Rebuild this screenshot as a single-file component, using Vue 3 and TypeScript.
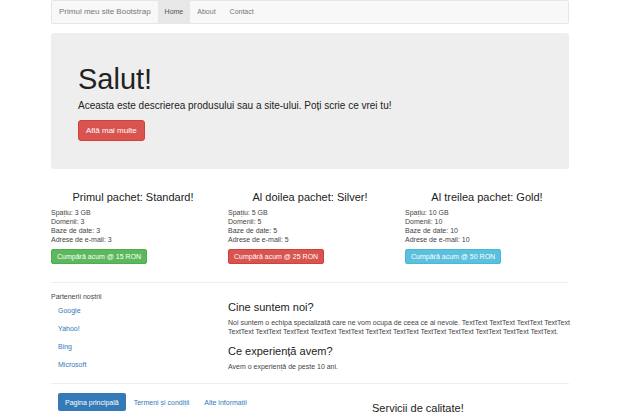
<script setup lang="ts">
interface Plan {
  title: string
  amount: number
  price: number
  tone: 'success' | 'danger' | 'info'
}

const navigation: string[] = ['Home', 'About', 'Contact']
const plans: Plan[] = [
  { title: 'Primul pachet: Standard!', amount: 3, price: 15, tone: 'success' },
  { title: 'Al doilea pachet: Silver!', amount: 5, price: 25, tone: 'danger' },
  { title: 'Al treilea pachet: Gold!', amount: 10, price: 50, tone: 'info' },
]
const partners: string[] = ['Google', 'Yahoo!', 'Bing', 'Microsoft']
const pills: string[] = ['Pagina principală', 'Termeni și condiții', 'Alte informații']
const filler: string = Array(16).fill('TextText').join(' ')
</script>

<template>
  <div class="container">
    <nav class="navbar">
      <a class="brand" href="#">Primul meu site Bootstrap</a>
      <a
        v-for="(item, index) in navigation"
        :key="item"
        class="nav-link"
        :class="{ active: index === 0 }"
        href="#"
      >{{ item }}</a>
    </nav>

    <header class="hero">
      <h1>Salut!</h1>
      <p class="lead">Aceasta este descrierea produsului sau a site-ului. Poți scrie ce vrei tu!</p>
      <button class="button danger large" type="button">Află mai multe</button>
    </header>

    <main>
      <section class="plans">
        <article v-for="plan in plans" :key="plan.title">
          <h2 class="centered">{{ plan.title }}</h2>
          <p>
            Spațiu: {{ plan.amount }} GB<br>
            Domenii: {{ plan.amount }}<br>
            Baze de date: {{ plan.amount }}<br>
            Adrese de e-mail: {{ plan.amount }}
          </p>
          <button class="button" :class="plan.tone" type="button">Cumpără acum @ {{ plan.price }} RON</button>
        </article>
      </section>

      <section class="about">
        <aside>
          <p>Partenerii noștrii</p>
          <ul class="partners">
            <li v-for="partner in partners" :key="partner"><a href="#">{{ partner }}</a></li>
          </ul>
        </aside>
        <div class="story">
          <h2>Cine suntem noi?</h2>
          <p>Noi suntem o echipa specializată care ne vom ocupa de ceea ce ai nevoie. {{ filler }}.</p>
          <h2>Ce experiență avem?</h2>
          <p>Avem o experiență de peste 10 ani.</p>
        </div>
      </section>
    </main>

    <footer class="footer">
      <nav class="pills">
        <a v-for="(pill, index) in pills" :key="pill" :class="{ active: index === 0 }" href="#">{{ pill }}</a>
      </nav>
      <h2 class="centered">Servicii de calitate!</h2>
    </footer>
  </div>
</template>

<style>
body {
  background: #fff;
}
</style>

<style scoped>
.container {
  padding: 0 51px;
  color: #444;
  font-family: "Liberation Sans", Arial, sans-serif;
  font-size: 7px;
  line-height: 9px;
}

h1,
h2,
p,
ul {
  margin: 0;
  padding: 0;
}

a {
  color: #337ab7;
  text-decoration: none;
}

h1,
h2 {
  color: #222;
  font-weight: 400;
}

h1 {
  font-size: 29px;
  line-height: 32px;
}

h2 {
  font-size: 11px;
  line-height: 12px;
}

.centered {
  text-align: center;
}

.navbar {
  display: flex;
  border: 1px solid #e7e7e7;
  border-radius: 2px;
  background: #f8f8f8;
  line-height: 22px;
}

.navbar a {
  padding: 0 7px;
  color: #777;
}

.navbar .brand {
  font-size: 8px;
}

.navbar .active {
  background: #e7e7e7;
  color: #555;
}

.hero {
  margin-top: 9px;
  padding: 30px 27px 28px;
  border-radius: 3px;
  background: #eee;
}

.lead {
  margin: 4px 0 7px;
  color: #222;
  font-size: 10px;
  line-height: 14px;
}

.button {
  display: block;
  padding: 2px 5px;
  border: 1px solid;
  border-radius: 2px;
  color: #fff;
  font: inherit;
}

.button.large {
  padding: 4px 7px;
  border-radius: 3px;
  font-size: 8px;
  line-height: 11px;
}

.success {
  border-color: #4cae4c;
  background: #5cb85c;
}

.danger {
  border-color: #d43f3a;
  background: #d9534f;
}

.info {
  border-color: #46b8da;
  background: #5bc0de;
}

.plans {
  display: grid;
  grid-template-columns: repeat(3, 1fr);
  gap: 13px;
  padding: 22px 0 18px;
}

.plans p {
  margin: 5px 0;
}

.about {
  display: grid;
  grid-template-columns: repeat(3, 1fr);
  gap: 0 13px;
  padding: 9px 0 10px;
  border-top: 1px solid #eee;
  border-bottom: 1px solid #eee;
}

.partners {
  list-style: none;
}

.partners a {
  display: block;
  padding: 5px 7px 4px;
}

.story {
  grid-column: span 2;
  margin-right: -6px;
}

.story h2 {
  margin: 9px 0 5px;
}

.footer {
  display: grid;
  grid-template-columns: 2fr 3fr;
  gap: 13px;
  padding-top: 9px;
}

.footer h2 {
  margin-top: 9px;
}

.pills {
  display: flex;
  align-items: flex-start;
  gap: 1px;
  padding-left: 7px;
  white-space: nowrap;
}

.pills a {
  padding: 5px 7px 4px;
  border-radius: 2px;
}

.pills .active {
  background: #337ab7;
  color: #fff;
}
</style>
